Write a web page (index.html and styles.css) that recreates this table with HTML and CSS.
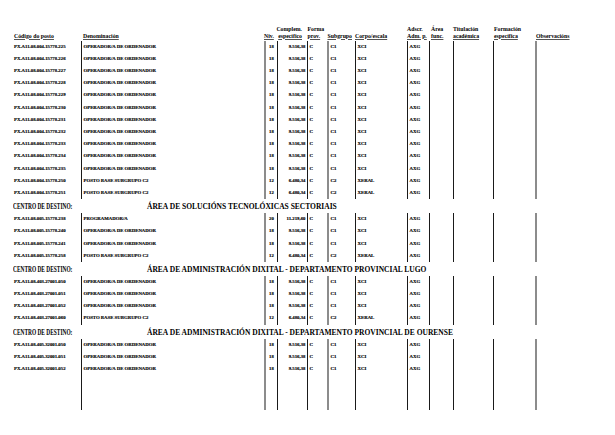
FILE: index.html
```html
<!DOCTYPE html>
<html lang="gl">
<head>
<meta charset="utf-8">
<title>RPT</title>
<link rel="stylesheet" href="styles.css">
</head>
<body>
<div class="page">
  <div class="grid head">
    <div class="h hc1"><span class="u">Código do posto</span></div>
    <div class="h hc2"><span class="u">Denominación</span></div>
    <div class="h hc3"><span class="u">Niv.</span></div>
    <div class="h hc4"><span>Complem.</span><span class="u">específico</span></div>
    <div class="h hc5"><span>Forma</span><span class="u">prov.</span></div>
    <div class="h hc6"><span class="u">Subgrupo</span></div>
    <div class="h hc7"><span class="u">Corpo/escala</span></div>
    <div class="h hc8"><span>Adscr.</span><span class="u">Adm. p.</span></div>
    <div class="h hc9"><span>Área</span><span class="u">func.</span></div>
    <div class="h hc10"><span>Titulación</span><span class="u">académica</span></div>
    <div class="h hc11"><span>Formación</span><span class="u">específica</span></div>
    <div class="h hc12"><span class="u">Observacións</span></div>
  </div>

  <div class="grid row"><span>PX.A11.08.004.15778.225</span><span>OPERADOR/A DE ORDENADOR</span><span class="g ctr">18</span><span class="rt">9.516,38</span><span>C</span><span class="g">C1</span><span>XCI</span><span>AXG</span><span></span><span></span><span></span><span class="g"></span></div>
  <div class="grid row"><span>PX.A11.08.004.15778.226</span><span>OPERADOR/A DE ORDENADOR</span><span class="g ctr">18</span><span class="rt">9.516,38</span><span>C</span><span class="g">C1</span><span>XCI</span><span>AXG</span><span></span><span></span><span></span><span class="g"></span></div>
  <div class="grid row"><span>PX.A11.08.004.15778.227</span><span>OPERADOR/A DE ORDENADOR</span><span class="g ctr">18</span><span class="rt">9.516,38</span><span>C</span><span class="g">C1</span><span>XCI</span><span>AXG</span><span></span><span></span><span></span><span class="g"></span></div>
  <div class="grid row"><span>PX.A11.08.004.15778.228</span><span>OPERADOR/A DE ORDENADOR</span><span class="g ctr">18</span><span class="rt">9.516,38</span><span>C</span><span class="g">C1</span><span>XCI</span><span>AXG</span><span></span><span></span><span></span><span class="g"></span></div>
  <div class="grid row"><span>PX.A11.08.004.15778.229</span><span>OPERADOR/A DE ORDENADOR</span><span class="g ctr">18</span><span class="rt">9.516,38</span><span>C</span><span class="g">C1</span><span>XCI</span><span>AXG</span><span></span><span></span><span></span><span class="g"></span></div>
  <div class="grid row"><span>PX.A11.08.004.15778.230</span><span>OPERADOR/A DE ORDENADOR</span><span class="g ctr">18</span><span class="rt">9.516,38</span><span>C</span><span class="g">C1</span><span>XCI</span><span>AXG</span><span></span><span></span><span></span><span class="g"></span></div>
  <div class="grid row"><span>PX.A11.08.004.15778.231</span><span>OPERADOR/A DE ORDENADOR</span><span class="g ctr">18</span><span class="rt">9.516,38</span><span>C</span><span class="g">C1</span><span>XCI</span><span>AXG</span><span></span><span></span><span></span><span class="g"></span></div>
  <div class="grid row"><span>PX.A11.08.004.15778.232</span><span>OPERADOR/A DE ORDENADOR</span><span class="g ctr">18</span><span class="rt">9.516,38</span><span>C</span><span class="g">C1</span><span>XCI</span><span>AXG</span><span></span><span></span><span></span><span class="g"></span></div>
  <div class="grid row"><span>PX.A11.08.004.15778.233</span><span>OPERADOR/A DE ORDENADOR</span><span class="g ctr">18</span><span class="rt">9.516,38</span><span>C</span><span class="g">C1</span><span>XCI</span><span>AXG</span><span></span><span></span><span></span><span class="g"></span></div>
  <div class="grid row"><span>PX.A11.08.004.15778.234</span><span>OPERADOR/A DE ORDENADOR</span><span class="g ctr">18</span><span class="rt">9.516,38</span><span>C</span><span class="g">C1</span><span>XCI</span><span>AXG</span><span></span><span></span><span></span><span class="g"></span></div>
  <div class="grid row"><span>PX.A11.08.004.15778.235</span><span>OPERADOR/A DE ORDENADOR</span><span class="g ctr">18</span><span class="rt">9.516,38</span><span>C</span><span class="g">C1</span><span>XCI</span><span>AXG</span><span></span><span></span><span></span><span class="g"></span></div>
  <div class="grid row"><span>PX.A11.08.004.15778.250</span><span>POSTO BASE SUBGRUPO C2</span><span class="g ctr">12</span><span class="rt">6.480,34</span><span>C</span><span class="g">C2</span><span>XERAL</span><span>AXG</span><span></span><span></span><span></span><span class="g"></span></div>
  <div class="grid row"><span>PX.A11.08.004.15778.251</span><span>POSTO BASE SUBGRUPO C2</span><span class="g ctr">12</span><span class="rt">6.480,34</span><span>C</span><span class="g">C2</span><span>XERAL</span><span>AXG</span><span></span><span></span><span></span><span class="g"></span></div>

  <div class="centro"><span class="lbl"><span>CENTRO DE DESTINO:</span></span><span class="name">ÁREA DE SOLUCIÓNS TECNOLÓXICAS SECTORIAIS</span></div>
  <div class="grid row"><span>PX.A11.08.005.15778.238</span><span>PROGRAMADOR/A</span><span class="g ctr">20</span><span class="rt">11.219,60</span><span>C</span><span class="g">C1</span><span>XCI</span><span>AXG</span><span></span><span></span><span></span><span class="g"></span></div>
  <div class="grid row"><span>PX.A11.08.005.15778.240</span><span>OPERADOR/A DE ORDENADOR</span><span class="g ctr">18</span><span class="rt">9.516,38</span><span>C</span><span class="g">C1</span><span>XCI</span><span>AXG</span><span></span><span></span><span></span><span class="g"></span></div>
  <div class="grid row"><span>PX.A11.08.005.15778.241</span><span>OPERADOR/A DE ORDENADOR</span><span class="g ctr">18</span><span class="rt">9.516,38</span><span>C</span><span class="g">C1</span><span>XCI</span><span>AXG</span><span></span><span></span><span></span><span class="g"></span></div>
  <div class="grid row"><span>PX.A11.08.005.15778.258</span><span>POSTO BASE SUBGRUPO C2</span><span class="g ctr">12</span><span class="rt">6.480,34</span><span>C</span><span class="g">C2</span><span>XERAL</span><span>AXG</span><span></span><span></span><span></span><span class="g"></span></div>

  <div class="centro"><span class="lbl"><span>CENTRO DE DESTINO:</span></span><span class="name">ÁREA DE ADMINISTRACIÓN DIXITAL - DEPARTAMENTO PROVINCIAL LUGO</span></div>
  <div class="grid row"><span>PX.A11.08.403.27001.050</span><span>OPERADOR/A DE ORDENADOR</span><span class="g ctr">18</span><span class="rt">9.516,38</span><span>C</span><span class="g">C1</span><span>XCI</span><span>AXG</span><span></span><span></span><span></span><span class="g"></span></div>
  <div class="grid row"><span>PX.A11.08.403.27001.051</span><span>OPERADOR/A DE ORDENADOR</span><span class="g ctr">18</span><span class="rt">9.516,38</span><span>C</span><span class="g">C1</span><span>XCI</span><span>AXG</span><span></span><span></span><span></span><span class="g"></span></div>
  <div class="grid row"><span>PX.A11.08.403.27001.052</span><span>OPERADOR/A DE ORDENADOR</span><span class="g ctr">18</span><span class="rt">9.516,38</span><span>C</span><span class="g">C1</span><span>XCI</span><span>AXG</span><span></span><span></span><span></span><span class="g"></span></div>
  <div class="grid row"><span>PX.A11.08.403.27001.060</span><span>POSTO BASE SUBGRUPO C2</span><span class="g ctr">12</span><span class="rt">6.480,34</span><span>C</span><span class="g">C2</span><span>XERAL</span><span>AXG</span><span></span><span></span><span></span><span class="g"></span></div>

  <div class="centro"><span class="lbl"><span>CENTRO DE DESTINO:</span></span><span class="name">ÁREA DE ADMINISTRACIÓN DIXITAL - DEPARTAMENTO PROVINCIAL DE OURENSE</span></div>
  <div class="grid row"><span>PX.A11.08.405.32001.050</span><span>OPERADOR/A DE ORDENADOR</span><span class="g ctr">18</span><span class="rt">9.516,38</span><span>C</span><span class="g">C1</span><span>XCI</span><span>AXG</span><span></span><span></span><span></span><span class="g"></span></div>
  <div class="grid row"><span>PX.A11.08.405.32001.051</span><span>OPERADOR/A DE ORDENADOR</span><span class="g ctr">18</span><span class="rt">9.516,38</span><span>C</span><span class="g">C1</span><span>XCI</span><span>AXG</span><span></span><span></span><span></span><span class="g"></span></div>
  <div class="grid row"><span>PX.A11.08.405.32001.052</span><span>OPERADOR/A DE ORDENADOR</span><span class="g ctr">18</span><span class="rt">9.516,38</span><span>C</span><span class="g">C1</span><span>XCI</span><span>AXG</span><span></span><span></span><span></span><span class="g"></span></div>
  <div class="grid row filler"><span></span><span></span><span class="g"></span><span></span><span></span><span class="g"></span><span></span><span></span><span></span><span></span><span></span><span class="g"></span></div>
</div>
</body>
</html>
```

FILE: styles.css
```css
html, body {
  margin: 0;
  padding: 0;
  background: #ffffff;
}

body {
  font-family: "Liberation Serif", "Times New Roman", serif;
  font-weight: bold;
  color: #000000;
}

.page {
  width: 615px;
  height: 435px;
  box-sizing: border-box;
  padding-top: 25.5px;
  overflow: hidden;
}

.grid {
  display: grid;
  grid-template-columns: 68px 183px 13px 30px 20px 28px 52px 22px 24px 40px 42px 65px;
  margin-left: 13px;
}

/* header */
.head {
  height: 14px;
  margin-bottom: 1.5px;
  font-size: 5.8px;
  line-height: 7px;
}

.head .h {
  display: flex;
  flex-direction: column;
  justify-content: flex-end;
  white-space: nowrap;
}

.head .u {
  text-decoration: underline;
  text-decoration-thickness: 0.4px;
  text-decoration-color: #555555;
  text-underline-offset: 0.5px;
}

.hc1 { padding-left: 1px; }
.hc2 { padding-left: 2px; }
.hc3 { padding-left: 0; }
.hc4 { align-items: flex-end; padding-right: 5px; }
.hc5 { padding-left: 0.5px; }
.hc6 { padding-left: 0.5px; }
.hc7 { padding-left: 0; }
.hc8 { padding-left: 0; }
.hc9 { padding-left: 2px; }
.hc10 { padding-left: 0; }
.hc11 { padding-left: 1px; }
.hc12 { padding-left: 1px; }

/* data rows */
.row {
  height: 12.2px;
  font-size: 4.8px;
  line-height: 1;
  -webkit-text-stroke: 0.15px #000000;
}

.row > span {
  display: flex;
  align-items: center;
  border-left: 1px solid #1a1a1a;
  padding-left: 1.5px;
  white-space: nowrap;
  overflow: visible;
}

.row > span:first-child {
  border-left: 0;
  padding-left: 1px;
}

.row > span.g {
  border-left: 2px solid #8c8c8c;
}

.row > span.ctr {
  justify-content: center;
  padding-left: 0;
}

.row > span.rt {
  justify-content: flex-end;
  padding-left: 0;
  padding-right: 1.5px;
}

.filler {
  height: 34px;
}

/* section titles */
.centro {
  height: 14px;
  display: flex;
  align-items: center;
  padding-left: 13px;
  padding-top: 1px;
  box-sizing: border-box;
  font-size: 7.5px;
  white-space: nowrap;
}

.centro .lbl {
  width: 134px;
  flex: none;
}

.centro .lbl > span {
  display: inline-block;
  transform: scaleX(0.72);
  transform-origin: left center;
}
```
